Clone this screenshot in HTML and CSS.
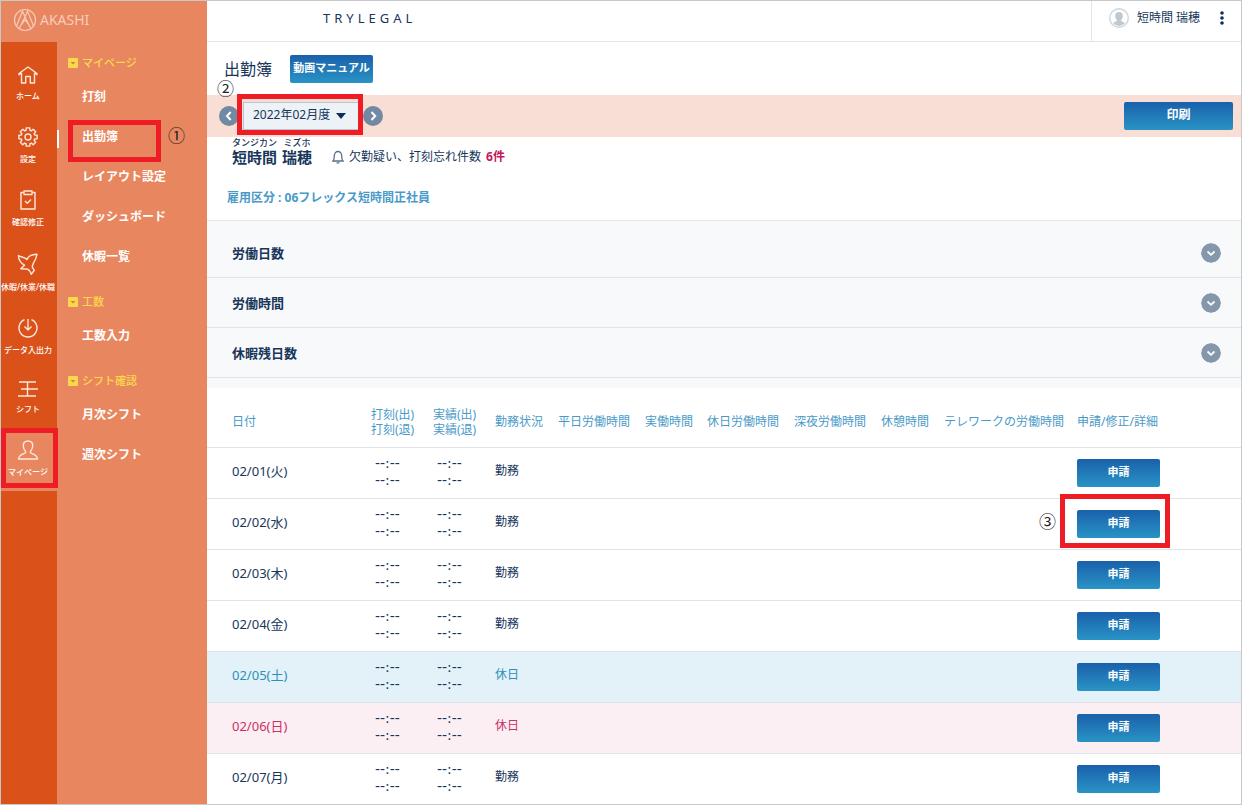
FILE: index.html
```html
<!DOCTYPE html>
<html lang="ja">
<head>
<meta charset="utf-8">
<meta name="viewport" content="width=device-width, initial-scale=1">
<title>出勤簿</title>
<link rel="stylesheet" href="styles.css">
</head>
<body>
<div class="app">
  <aside class="sidebar">
    <div class="brand">
      <svg class="brand-mark" viewBox="0 0 24 24" width="24" height="24" aria-hidden="true"><circle cx="12" cy="12" r="10.5"/><path d="M3.500 18 9.500 3 12 9l2.500-6 6 15M12 9l-6 12M12 9l6 12M8 17l4-5 4 5"/></svg>
      <span class="brand-name">AKASHI</span>
    </div>
    <div class="navs">
      <nav class="rail" aria-label="メイン">
        <a class="rail-item" href="#"><svg class="icon" viewBox="0 0 20 18" width="20" height="18"><path d="M3.500 6.800 1 8.800v-1.300L10 1l9 6.500v1.300l-2.500-2M3.500 6.800V17h4.200v-6.500h4.600V17h4.200V6.800"/></svg><span>ホーム</span></a>
        <a class="rail-item" href="#"><svg class="icon" viewBox="0 0 20 20" width="20" height="20"><path d="M16.730 8.070 19.130 8.230V11.770L16.730 11.930 16.120 13.390 17.710 15.200 15.200 17.710 13.390 16.120 11.930 16.730 11.770 19.130H8.230L8.070 16.730 6.610 16.120 4.800 17.710 2.290 15.200 3.880 13.390 3.270 11.930 .87 11.770V8.230L3.270 8.070 3.880 6.610 2.290 4.800 4.800 2.290 6.610 3.880 8.070 3.270 8.230 .87H11.770L11.930 3.270 13.390 3.880 15.200 2.290 17.710 4.800 16.120 6.610z"/><circle cx="10" cy="10" r="3"/></svg><span>設定</span></a>
        <a class="rail-item" href="#"><svg class="icon" viewBox="0 0 16 20" width="16" height="20"><path d="M4 2.500H1V19h14V2.500h-3M4 1h8v3.500H4zM5 11l2.300 2.300L11 9.500"/></svg><span>確認修正</span></a>
        <a class="rail-item" href="#"><svg class="icon" viewBox="0 0 22 22" width="22" height="22"><path d="M1.500 2.500C4 4.200 7.500 4 10 6.500c1-3.300 4-5 10-5.200-.6 2.500-1 5-3 7.700-.8 1.500-2 3.500-1.600 5.500l2 2.800-3.200 3.900c-.8-2.700-2-4.700-4.700-5.200l-5.700-.3 3.700-3.500C4.500 10.500 1.500 7 1.500 2.500z"/></svg><span>休暇/休業/休職</span></a>
        <a class="rail-item" href="#"><svg class="icon" viewBox="0 0 20 20" width="20" height="20"><path d="M6.500 1.700a9 9 0 1 0 7 0M10 1v10.500M6.500 8.500 10 12l3.500-3.500"/></svg><span>データ入出力</span></a>
        <a class="rail-item" href="#"><svg class="icon" viewBox="0 0 20 16" width="20" height="16"><path d="M1 1h17M3 8h17M0 15h18M9.500 1v14"/></svg><span>シフト</span></a>
        <a class="rail-item rail-item-current" href="#" aria-current="page"><svg class="icon" viewBox="0 0 22 20" width="22" height="20"><path d="M11 1c3.500 0 5 2.300 4.700 5.200-.2 2.300-1.200 3.900-2.200 5v1.600c2 1.500 6.800 1.600 7 6.200H1.500c.2-4.600 5-4.700 7-6.200v-1.600c-1-1.100-2-2.700-2.200-5C6 3.300 7.500 1 11 1z"/></svg><span>マイページ</span></a>
      </nav>
      <nav class="menu" aria-label="マイページ">
        <section class="menu-group">
          <h2 class="menu-title"><svg class="fold" viewBox="0 0 10 10" width="10" height="10"><rect width="10" height="10" rx="1"/><path d="M2.500 4h5L5 6.500z"/></svg>マイページ</h2>
          <a class="menu-item" href="#">打刻</a>
          <a class="menu-item menu-item-current" href="#" aria-current="page">出勤簿<span class="step step-one">①</span></a>
          <a class="menu-item" href="#">レイアウト設定</a>
          <a class="menu-item" href="#">ダッシュボード</a>
          <a class="menu-item" href="#">休暇一覧</a>
        </section>
        <section class="menu-group">
          <h2 class="menu-title"><svg class="fold" viewBox="0 0 10 10" width="10" height="10"><rect width="10" height="10" rx="1"/><path d="M2.500 4h5L5 6.500z"/></svg>工数</h2>
          <a class="menu-item" href="#">工数入力</a>
        </section>
        <section class="menu-group">
          <h2 class="menu-title"><svg class="fold" viewBox="0 0 10 10" width="10" height="10"><rect width="10" height="10" rx="1"/><path d="M2.500 4h5L5 6.500z"/></svg>シフト確認</h2>
          <a class="menu-item" href="#">月次シフト</a>
          <a class="menu-item" href="#">週次シフト</a>
        </section>
      </nav>
    </div>
  </aside>

  <div class="page">
    <header class="topbar">
      <span class="company">TRYLEGAL</span>
      <div class="user">
        <svg viewBox="0 0 20 20" width="20" height="20" aria-hidden="true"><circle cx="10" cy="10" r="9.300" fill="#fff" stroke="#cfd6dc" stroke-width="1.400"/><path d="M10 4c2.700 0 4 1.800 3.800 4.200-.1 1.700-.8 2.900-1.500 3.600v1.100c1 .8 2.700 1 3.700 2.100A7.800 7.800 0 0 1 10 18a7.800 7.800 0 0 1-6-3c1-1.100 2.700-1.300 3.700-2.100v-1.100c-.7-.7-1.400-1.900-1.500-3.600C6 5.800 7.300 4 10 4z" fill="#bfc9d1"/></svg>
        <span class="user-name">短時間 瑞穂</span>
        <button class="more" type="button" aria-label="メニュー"><svg viewBox="0 0 4 14" width="4" height="14"><circle cx="2" cy="2" r="1.800"/><circle cx="2" cy="7" r="1.800"/><circle cx="2" cy="12" r="1.800"/></svg></button>
      </div>
    </header>

    <main>
      <div class="title-row">
        <h1 class="title">出勤簿</h1>
        <button class="btn btn-manual" type="button">動画マニュアル</button>
      </div>

      <div class="period">
        <span class="step step-two">②</span>
        <button class="round" type="button" aria-label="前の月"><svg viewBox="0 0 20 20" width="20" height="20"><path d="M11.700 6 8 10l3.700 4"/></svg></button>
        <div class="month">
          <select class="month-select" aria-label="対象月"><option>2022年02月度</option></select>
          <svg class="caret" viewBox="0 0 10 6" width="10" height="6" aria-hidden="true"><path d="M0 0h10L5 6z"/></svg>
        </div>
        <button class="round" type="button" aria-label="次の月"><svg viewBox="0 0 20 20" width="20" height="20"><path d="M8.500 6l3.700 4-3.700 4"/></svg></button>
        <button class="btn btn-print" type="button">印刷</button>
      </div>

      <section class="person">
        <div class="person-row">
          <div class="name">
            <span class="name-part"><span class="kana">タンジカン</span>短時間</span>
            <span class="name-part"><span class="kana">ミズホ</span>瑞穂</span>
          </div>
          <p class="alert"><svg class="bell" viewBox="0 0 12 14" width="12" height="14" aria-hidden="true"><path d="M1 11c1-1 1.300-2 1.300-5C2.300 3 4 1.500 6 1.500S9.700 3 9.700 6c0 3 .3 4 1.300 5zM4.500 12.800h3"/></svg>欠勤疑い、打刻忘れ件数<strong class="count">6件</strong></p>
        </div>
        <p class="contract">雇用区分 : 06フレックス短時間正社員</p>
      </section>

      <section class="summary">
        <button class="fold-row" type="button">労働日数<svg class="round" viewBox="0 0 20 20" width="20" height="20"><circle cx="10" cy="10" r="10"/><path d="M6.500 8.500 10 11.800l3.500-3.300"/></svg></button>
        <button class="fold-row" type="button">労働時間<svg class="round" viewBox="0 0 20 20" width="20" height="20"><circle cx="10" cy="10" r="10"/><path d="M6.500 8.500 10 11.800l3.500-3.300"/></svg></button>
        <button class="fold-row" type="button">休暇残日数<svg class="round" viewBox="0 0 20 20" width="20" height="20"><circle cx="10" cy="10" r="10"/><path d="M6.500 8.500 10 11.800l3.500-3.300"/></svg></button>
      </section>

      <table class="book">
        <colgroup><col class="c-date"><col class="c-s"><col class="c-s"><col class="c-m"><col class="c-l"><col class="c-s"><col class="c-l"><col class="c-l"><col class="c-m"><col class="c-tele"><col></colgroup>
        <thead>
          <tr><th>日付</th><th>打刻(出)<br>打刻(退)</th><th>実績(出)<br>実績(退)</th><th>勤務状況</th><th>平日労働時間</th><th>実働時間</th><th>休日労働時間</th><th>深夜労働時間</th><th>休憩時間</th><th>テレワークの労働時間</th><th>申請/修正/詳細</th></tr>
        </thead>
        <tbody>
          <tr><td class="date">02/01(火)</td><td class="time">--:--<br>--:--</td><td class="time">--:--<br>--:--</td><td>勤務</td><td></td><td></td><td></td><td></td><td></td><td></td><td><button class="btn btn-apply" type="button">申請</button></td></tr>
          <tr><td class="date">02/02(水)</td><td class="time">--:--<br>--:--</td><td class="time">--:--<br>--:--</td><td>勤務</td><td></td><td></td><td></td><td></td><td></td><td></td><td><span class="target"><span class="step step-three">③</span><button class="btn btn-apply" type="button">申請</button></span></td></tr>
          <tr><td class="date">02/03(木)</td><td class="time">--:--<br>--:--</td><td class="time">--:--<br>--:--</td><td>勤務</td><td></td><td></td><td></td><td></td><td></td><td></td><td><button class="btn btn-apply" type="button">申請</button></td></tr>
          <tr><td class="date">02/04(金)</td><td class="time">--:--<br>--:--</td><td class="time">--:--<br>--:--</td><td>勤務</td><td></td><td></td><td></td><td></td><td></td><td></td><td><button class="btn btn-apply" type="button">申請</button></td></tr>
          <tr class="sat"><td class="date">02/05(土)</td><td class="time">--:--<br>--:--</td><td class="time">--:--<br>--:--</td><td>休日</td><td></td><td></td><td></td><td></td><td></td><td></td><td><button class="btn btn-apply" type="button">申請</button></td></tr>
          <tr class="sun"><td class="date">02/06(日)</td><td class="time">--:--<br>--:--</td><td class="time">--:--<br>--:--</td><td>休日</td><td></td><td></td><td></td><td></td><td></td><td></td><td><button class="btn btn-apply" type="button">申請</button></td></tr>
          <tr><td class="date">02/07(月)</td><td class="time">--:--<br>--:--</td><td class="time">--:--<br>--:--</td><td>勤務</td><td></td><td></td><td></td><td></td><td></td><td></td><td><button class="btn btn-apply" type="button">申請</button></td></tr>
        </tbody>
      </table>
    </main>
  </div>
</div>
</body>
</html>
```

FILE: styles.css
```css
*, *::before, *::after { box-sizing: border-box; }
body, h1, h2, p { margin: 0; }
body {
  font: 12px/16px "Noto Sans", "Noto Sans CJK JP", sans-serif;
  color: #17365a;
  background: #fff;
}
a { color: inherit; text-decoration: none; }
button, select { font: inherit; color: inherit; border: 0; padding: 0; margin: 0; cursor: pointer; }

.app { display: flex; min-height: 100vh; border: 1px solid #c8c8c8; }

/* sidebar */
.sidebar { flex: none; width: 206px; display: flex; flex-direction: column; background: #e8875f; color: #fff; }
.brand { display: flex; align-items: center; gap: 3px; height: 41px; padding: 0 0 4px 12px; }
.brand-mark { fill: none; stroke: #f6cdbc; stroke-width: 1.2; }
.brand-name { font-size: 14px; color: #f6cdbc; }
.navs { flex: 1; display: flex; }
.rail { flex: none; width: 56px; padding-top: 12px; background: #da5219; }
.rail-item {
  display: flex; flex-direction: column; align-items: center; gap: 5px;
  padding: 12px 2px 12px 0; font-size: 8px; line-height: 14px; font-weight: 500; white-space: nowrap; overflow: hidden;
}
.icon { display: block; fill: none; stroke: #fde6dc; stroke-width: 1.4; stroke-linejoin: round; }
.rail-item-current { position: relative; overflow: visible; background: #e8875f; }
.rail-item-current::after { content: ""; position: absolute; inset: 0 -1px 3px 0; border: 5px solid #ee1c24; }

.menu { flex: 1; display: flex; flex-direction: column; gap: 11px; padding-top: 7px; }
.menu-title { display: flex; align-items: center; gap: 4px; height: 28px; padding-left: 11px; font-size: 11px; font-weight: 500; color: #fbd74c; }
.fold { fill: #fbd74c; }
.fold path { fill: #e07a3c; }
.menu-item { display: flex; align-items: center; height: 40px; padding-left: 25px; font-weight: 700; }
.menu-item-current { position: relative; }
.menu-item-current::before { content: ""; position: absolute; left: 0; top: 13px; width: 2px; height: 18px; background: #fff; }
.menu-item-current::after { content: ""; position: absolute; left: 11px; top: 3px; width: 93px; height: 42px; border: 5px solid #ee1c24; }
.step { position: absolute; font-size: 17px; line-height: 20px; font-weight: 400; color: #222; }
.step-one { left: 111px; top: 9px; }

/* page */
.page { flex: 1; min-width: 0; }
.topbar { display: flex; justify-content: space-between; height: 41px; padding-left: 116px; border-bottom: 1px solid #dfe4e8; }
.company { padding-top: 9px; font-size: 13px; letter-spacing: 4px; }
.user { display: flex; align-items: center; gap: 8px; padding: 0 17px 6px 17px; border-left: 1px solid #dfe4e8; }
.user-name { white-space: nowrap; }
.more { display: flex; margin-left: 12px; background: none; fill: #0d2f55; }

.btn { border-radius: 2px; background: linear-gradient(#1a60ab, #2994c5); color: #fff; font-weight: 700; height: 28px; padding-bottom: 2px; }
.title-row { display: flex; align-items: center; gap: 18px; height: 53px; padding-left: 17px; }
.title { font-size: 16px; line-height: 24px; font-weight: 400; }
.btn-manual { width: 83px; font-size: 11px; }

.period { position: relative; display: flex; align-items: center; height: 42px; padding: 0 8px 0 12px; background: #f9ded6; }
.round { flex: none; display: block; width: 20px; height: 20px; border-radius: 50%; background: #7189a3; fill: none; stroke: #fff; stroke-width: 2; }
.round circle { fill: #8497ab; stroke: none; }
.month { position: relative; margin: 0 4px; }
.month::after { content: ""; position: absolute; inset: -8px -4px -5px -6px; border: 5px solid #ee1c24; pointer-events: none; }
.month-select { display: block; width: 116px; height: 28px; padding: 0 0 3px 9px; appearance: none; border: 1px solid #b9c6d2; background: #edf2f6; }
.caret { position: absolute; right: 13px; top: 11px; fill: #0d2f55; pointer-events: none; }
.btn-print { width: 109px; margin-left: auto; }
.step-two { left: 10px; top: -16px; }

.person { height: 83px; padding: 0 20px; }
.person-row { display: flex; align-items: flex-end; gap: 20px; padding-left: 5px; }
.name { display: flex; gap: 5px; font-size: 15px; line-height: 18px; font-weight: 700; }
.name-part { display: flex; flex-direction: column; align-items: center; }
.kana { font-size: 9px; line-height: 11px; font-weight: 500; }
.alert { display: flex; align-items: center; line-height: 18px; }
.bell { margin-right: 5px; fill: none; stroke: #5a7088; stroke-width: 1.3; }
.count { margin-left: 5px; color: #c2185b; }
.contract { padding-top: 24px; font-weight: 700; color: #4a9ac9; }

.summary { padding: 7px 0 10px; border-top: 1px solid #e2e7eb; background: #f7f9fb; }
.fold-row { display: flex; align-items: center; justify-content: space-between; width: 100%; height: 50px; padding: 0 20px 0 25px; border-bottom: 1px solid #dfe4e9; background: none; font-size: 13px; font-weight: 700; }
.fold-row .round { background: none; stroke-width: 1.8; }

/* attendance table */
.book { width: 100%; table-layout: fixed; border-collapse: separate; border-spacing: 0; }
.c-date { width: 164px; }
.c-s { width: 62px; }
.c-m { width: 63px; }
.c-l { width: 87px; }
.c-tele { width: 133px; }
th, td { padding: 0; text-align: left; border-bottom: 1px solid #dfe4e8; white-space: nowrap; }
th { height: 60px; padding-top: 8px; line-height: 15px; font-weight: 400; color: #4a9ac9; }
td { height: 51px; padding-bottom: 4px; }
th:first-child, td:first-child { padding-left: 25px; }
tbody tr:last-child td { height: 50px; border-bottom: 0; }
td.date { font-size: 13px; padding-bottom: 4px; }
td.time { padding: 0 0 2px 4px; font: 14px/17px "DejaVu Sans", sans-serif; }
.sat td { background: #e3f2f9; color: #2d8fb8; }
.sun td { background: #fbeff3; color: #cc2f68; }
.sat .time, .sun .time { color: #17365a; }
td:last-child { padding-bottom: 0; }
.btn-apply { display: block; width: 83px; font-size: 11px; }
.target { position: relative; display: block; width: 83px; }
.target::after { content: ""; position: absolute; inset: -16px -10px -10px -17px; border: 5px solid #ee1c24; pointer-events: none; }
.step-three { left: -38px; top: 2px; }
```
